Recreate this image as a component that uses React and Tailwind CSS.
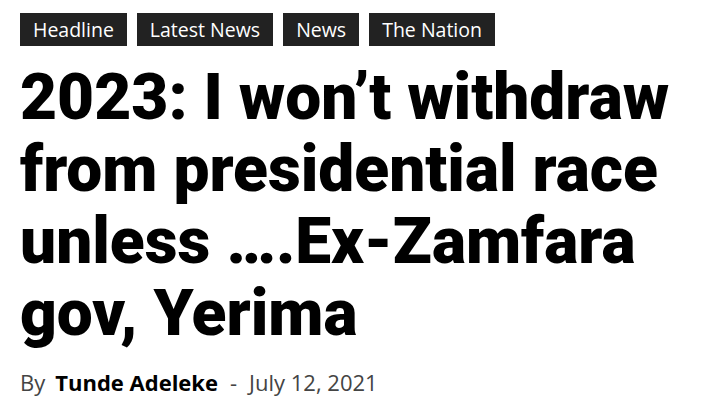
import React from 'react';

const TAGS = ['Headline', 'Latest News', 'News', 'The Nation'];

export default function App() {
  return (
    <div className="w-[718px] h-[413px] bg-white px-5 pt-[13px]">
      <div className="flex gap-[10px]">
        {TAGS.map(tag => (
          <span
            key={tag}
            className="bg-[#222222] text-white px-[13px] h-[33px] flex items-center text-[19.5px] font-['Open_Sans',sans-serif]"
          >
            {tag}
          </span>
        ))}
      </div>
      <h1 className="mt-[16px] text-[64px] leading-[72px] font-black text-black font-['Roboto',sans-serif]">
        2023: I won’t withdraw from presidential race unless ….Ex-Zamfara gov, Yerima
      </h1>
      <div className="mt-[16px] flex items-center text-[22px] font-['Open_Sans',sans-serif]">
        <span className="text-[#444]">By</span>
        <span className="ml-[10px] font-bold text-black">Tunde Adeleke</span>
        <span className="mx-[12px] text-[#444]">-</span>
        <span className="text-[#444]">July 12, 2021</span>
      </div>
    </div>
  );
}
